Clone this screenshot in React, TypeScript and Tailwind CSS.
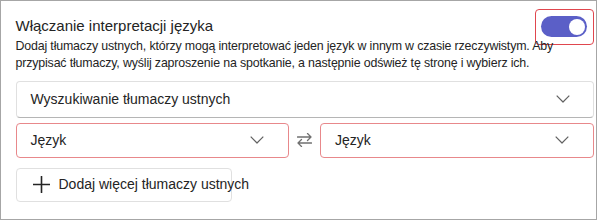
function Chevron() {
  return (
    <svg width="14" height="8" viewBox="0 0 14 8" fill="none" className="shrink-0">
      <path d="M0.7 0.7 7 7 13.3 0.7" stroke="#616161" strokeWidth="1.2" strokeLinejoin="round" />
    </svg>
  );
}

function SwapIcon() {
  return (
    <svg width="15" height="14" viewBox="0 0 15 14" fill="none" className="shrink-0">
      <path d="M0.5 4h13.5M10.5 0.5 14 4l-3.5 3.5" stroke="#707070" strokeWidth="1.3" strokeLinecap="round" strokeLinejoin="round" />
      <path d="M14.5 10H1M4.5 6.5 1 10l3.5 3.5" stroke="#707070" strokeWidth="1.3" strokeLinecap="round" strokeLinejoin="round" />
    </svg>
  );
}

function PlusIcon() {
  return (
    <svg width="17" height="17" viewBox="0 0 17 17" fill="none" className="shrink-0">
      <path d="M8.5 0.5v16M0.5 8.5h16" stroke="#242424" strokeWidth="1.6" strokeLinecap="round" />
    </svg>
  );
}

function LangSelect() {
  return (
    <div className="flex h-[35px] flex-1 items-center justify-between rounded-[4px] border border-[#e8888b] pl-[14px] pr-[24px]">
      <span className="text-[14px] text-[#242424]">Język</span>
      <Chevron />
    </div>
  );
}

export default function App() {
  return (
    <div
      className="h-[220px] w-[597px] overflow-hidden border-[1.5px] border-[#a6a6a6] bg-white"
      style={{ fontFamily: '"Liberation Sans", Arial, sans-serif' }}
    >
      <div className="flex flex-col pl-[14.5px] pr-[2.5px] pt-[14.5px]">
        {/* header row */}
        <div className="flex h-[20px] items-center justify-between">
          <h2 className="text-[15px] leading-[20px] text-[#242424]">Włączanie interpretacji języka</h2>
          <div className="-mb-[10px] -mt-[8px] rounded-[4px] border-[1.5px] border-[#e0464e] px-[5.5px] py-[6.5px]">
            <div className="flex h-[21px] w-[46px] items-center justify-end rounded-full bg-[#5b5fc7] pr-[2.5px]">
              <div className="h-[16px] w-[16px] rounded-full bg-white" />
            </div>
          </div>
        </div>
        <p className="mt-[2.5px] pr-[30px] text-[12.4px] leading-[17px] tracking-[-0.16px] text-[#242424]">
          Dodaj tłumaczy ustnych, którzy mogą interpretować jeden język w innym w czasie rzeczywistym. Aby przypisać tłumaczy, wyślij zaproszenie na spotkanie, a następnie odśwież tę stronę i wybierz ich.
        </p>

        <div className="mt-[8.5px] flex h-[37px] items-center justify-between rounded-[4px] border border-[#e0e0e0] border-b-[#b5b5b5] pl-[14px] pr-[23px]">
          <span className="text-[14px] text-[#242424]">Wyszukiwanie tłumaczy ustnych</span>
          <Chevron />
        </div>

        <div className="mt-[5px] flex items-center gap-[8px]">
          <LangSelect />
          <SwapIcon />
          <LangSelect />
        </div>

        <button className="mt-[10px] flex h-[34px] w-[216px] items-center gap-[9px] whitespace-nowrap rounded-[4px] border border-[#e0e0e0] pl-[16px] text-[14px] text-[#242424]">
          <PlusIcon />
          <span>Dodaj więcej tłumaczy ustnych</span>
        </button>
      </div>
    </div>
  );
}
